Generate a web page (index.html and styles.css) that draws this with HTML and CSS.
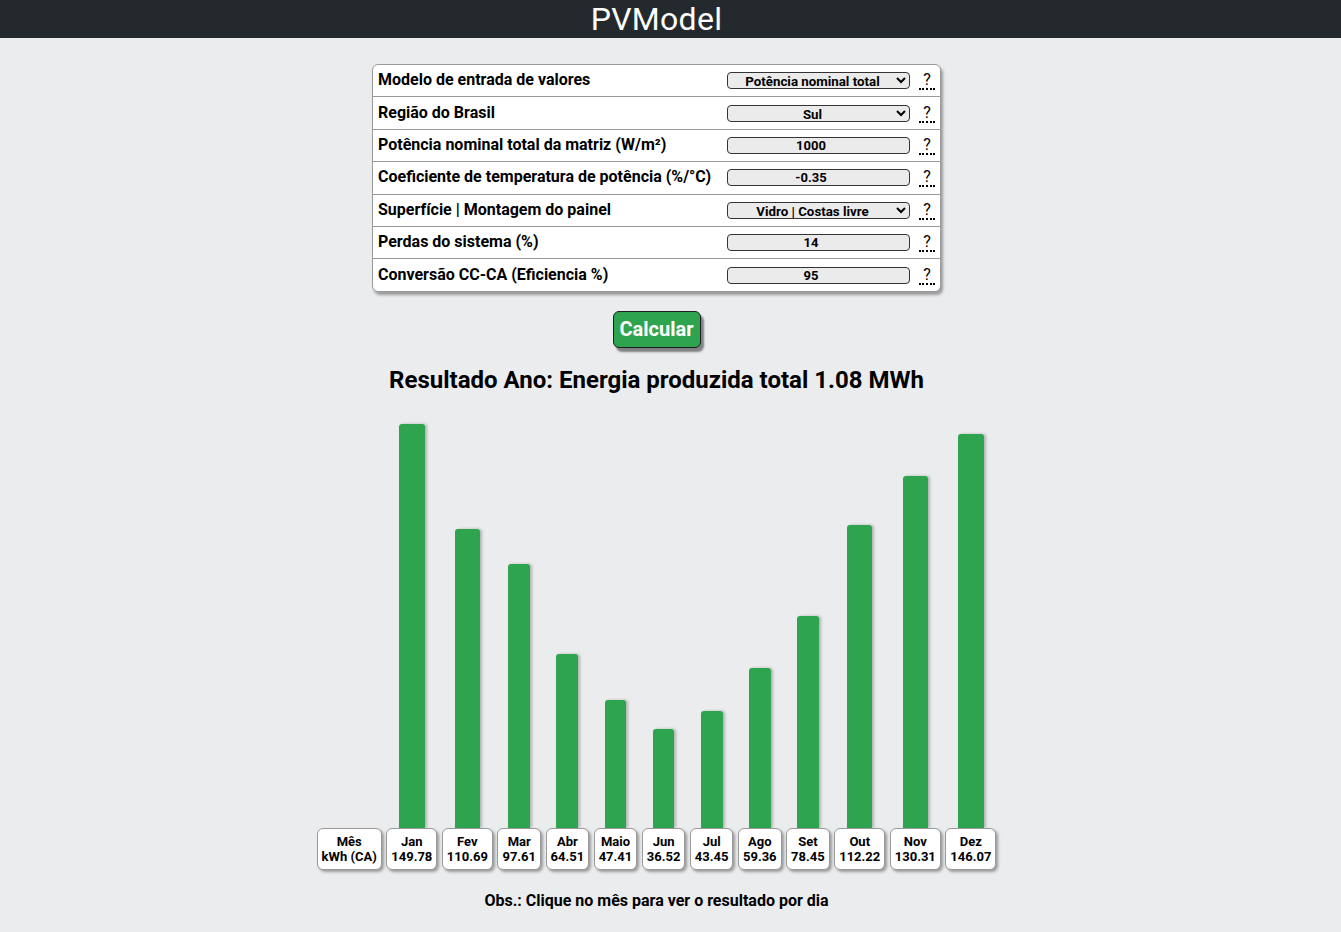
FILE: index.html
```html
<!DOCTYPE html>
<html lang="pt-BR">
<head>
<meta charset="utf-8">
<title>PVModel</title>
<link rel="stylesheet" href="styles.css">
</head>
<body>
<header class="topbar"><div class="brand">PVModel</div></header>
<main class="page">
  <section class="form-card">
    <div class="row">
      <div class="label">Modelo de entrada de valores</div>
      <select class="ctl"><option>Potência nominal total</option></select>
      <span class="help">?</span>
    </div>
    <div class="row">
      <div class="label">Região do Brasil</div>
      <select class="ctl"><option>Sul</option></select>
      <span class="help">?</span>
    </div>
    <div class="row">
      <div class="label">Potência nominal total da matriz (W/m²)</div>
      <input class="ctl" type="text" value="1000">
      <span class="help">?</span>
    </div>
    <div class="row">
      <div class="label">Coeficiente de temperatura de potência (%/°C)</div>
      <input class="ctl" type="text" value="-0.35">
      <span class="help">?</span>
    </div>
    <div class="row">
      <div class="label">Superfície | Montagem do painel</div>
      <select class="ctl"><option>Vidro | Costas livre</option></select>
      <span class="help">?</span>
    </div>
    <div class="row">
      <div class="label">Perdas do sistema (%)</div>
      <input class="ctl" type="text" value="14">
      <span class="help">?</span>
    </div>
    <div class="row">
      <div class="label">Conversão CC-CA (Eficiencia %)</div>
      <input class="ctl" type="text" value="95">
      <span class="help">?</span>
    </div>
  </section>

  <button class="calc" type="button">Calcular</button>

  <h2 class="result">Resultado Ano: Energia produzida total 1.08 MWh</h2>

  <section class="chart">
    <div class="barcell"></div>
    <div class="barcell"><div class="bar" style="height:404px"></div></div>
    <div class="barcell"><div class="bar" style="height:298.6px"></div></div>
    <div class="barcell"><div class="bar" style="height:263.3px"></div></div>
    <div class="barcell"><div class="bar" style="height:174px"></div></div>
    <div class="barcell"><div class="bar" style="height:127.9px"></div></div>
    <div class="barcell"><div class="bar" style="height:98.5px"></div></div>
    <div class="barcell"><div class="bar" style="height:117.2px"></div></div>
    <div class="barcell"><div class="bar" style="height:160.1px"></div></div>
    <div class="barcell"><div class="bar" style="height:211.6px"></div></div>
    <div class="barcell"><div class="bar" style="height:302.7px"></div></div>
    <div class="barcell"><div class="bar" style="height:351.5px"></div></div>
    <div class="barcell"><div class="bar" style="height:394px"></div></div>

    <div class="month">Mês<br>kWh (CA)</div>
    <div class="month">Jan<br>149.78</div>
    <div class="month">Fev<br>110.69</div>
    <div class="month">Mar<br>97.61</div>
    <div class="month">Abr<br>64.51</div>
    <div class="month">Maio<br>47.41</div>
    <div class="month">Jun<br>36.52</div>
    <div class="month">Jul<br>43.45</div>
    <div class="month">Ago<br>59.36</div>
    <div class="month">Set<br>78.45</div>
    <div class="month">Out<br>112.22</div>
    <div class="month">Nov<br>130.31</div>
    <div class="month">Dez<br>146.07</div>
  </section>

  <p class="obs">Obs.: Clique no mês para ver o resultado por dia</p>
</main>
</body>
</html>
```

FILE: styles.css
```css
html, body {
  margin: 0;
  padding: 0;
  background: #ebecee;
  font-family: Roboto, "Liberation Sans", Arial, sans-serif;
  color: #000;
}

.topbar {
  height: 38px;
  background: #24292e;
  padding-right: 28px;
  display: flex;
  justify-content: center;
  align-items: center;
}

.brand {
  color: #fff;
  font-family: Roboto, "Liberation Sans", sans-serif;
  font-size: 32px;
  font-weight: 400;
  line-height: 38px;
  letter-spacing: 0.3px;
}

.page {
  margin-right: 28px;
  display: flex;
  flex-direction: column;
  align-items: center;
  padding-top: 26px;
}

.form-card {
  width: 567px;
  background: #fff;
  border: 1px solid #9a9a9a;
  border-radius: 6px;
  box-shadow: 2px 3px 3px rgba(0, 0, 0, 0.35);
  overflow: hidden;
}

.row {
  display: flex;
  align-items: center;
  height: 31.4px;
  padding-left: 5px;
  border-top: 1px solid #9a9a9a;
}

.row:first-child {
  border-top: none;
}

.label {
  flex: 1;
  font-size: 16px;
  font-weight: 700;
  line-height: 19px;
  margin-bottom: 2px;
}

.ctl {
  box-sizing: border-box;
  width: 183px;
  height: 17px;
  margin: 0;
  padding: 0 4px;
  border: 1px solid #333;
  border-radius: 4px;
  background-color: #ebebeb;
  font-family: Roboto, "Liberation Sans", sans-serif;
  font-size: 13px;
  font-weight: 700;
  color: #000;
  text-align: center;
  outline: none;
}

input.ctl {
  padding: 0 15px 0 0;
}

select.ctl {
  text-align-last: center;
  font-size: 13.3px;
}

.help {
  width: 16px;
  margin: 0 5px 0 9px;
  font-size: 16px;
  line-height: 17px;
  text-align: center;
  border-bottom: 2px dotted #000;
}

.calc {
  margin-top: 19px;
  width: 88px;
  height: 37px;
  padding: 0;
  background: #2ea44f;
  color: #fff;
  border: 1px solid #1b1f23;
  border-radius: 6px;
  box-shadow: 3px 4px 2px rgba(0, 0, 0, 0.45);
  font-family: Roboto, "Liberation Sans", sans-serif;
  font-size: 20px;
  font-weight: 700;
  line-height: 24px;
}

.result {
  margin: 18px 0 0;
  font-size: 24px;
  font-weight: 700;
  line-height: 28px;
}

.chart {
  margin-top: 30px;
  display: grid;
  grid-template-columns: repeat(13, auto);
  column-gap: 4.5px;
  align-items: end;
}

.barcell {
  display: flex;
  justify-content: center;
  align-items: flex-end;
}

.bar {
  width: 50%;
  background: #2ea44f;
  border-radius: 3px 3px 0 0;
  box-shadow: 2px 0 3px rgba(0, 0, 0, 0.25);
}

.month {
  box-sizing: border-box;
  height: 42px;
  padding: 5px 4px 0;
  background: #fff;
  border: 1px solid #9a9a9a;
  border-radius: 6px;
  box-shadow: 2px 2px 3px rgba(0, 0, 0, 0.35);
  font-size: 13px;
  font-weight: 700;
  line-height: 15px;
  text-align: center;
  white-space: nowrap;
}

.obs {
  margin: 21px 0 0;
  font-size: 16px;
  font-weight: 700;
  line-height: 19px;
}
```
